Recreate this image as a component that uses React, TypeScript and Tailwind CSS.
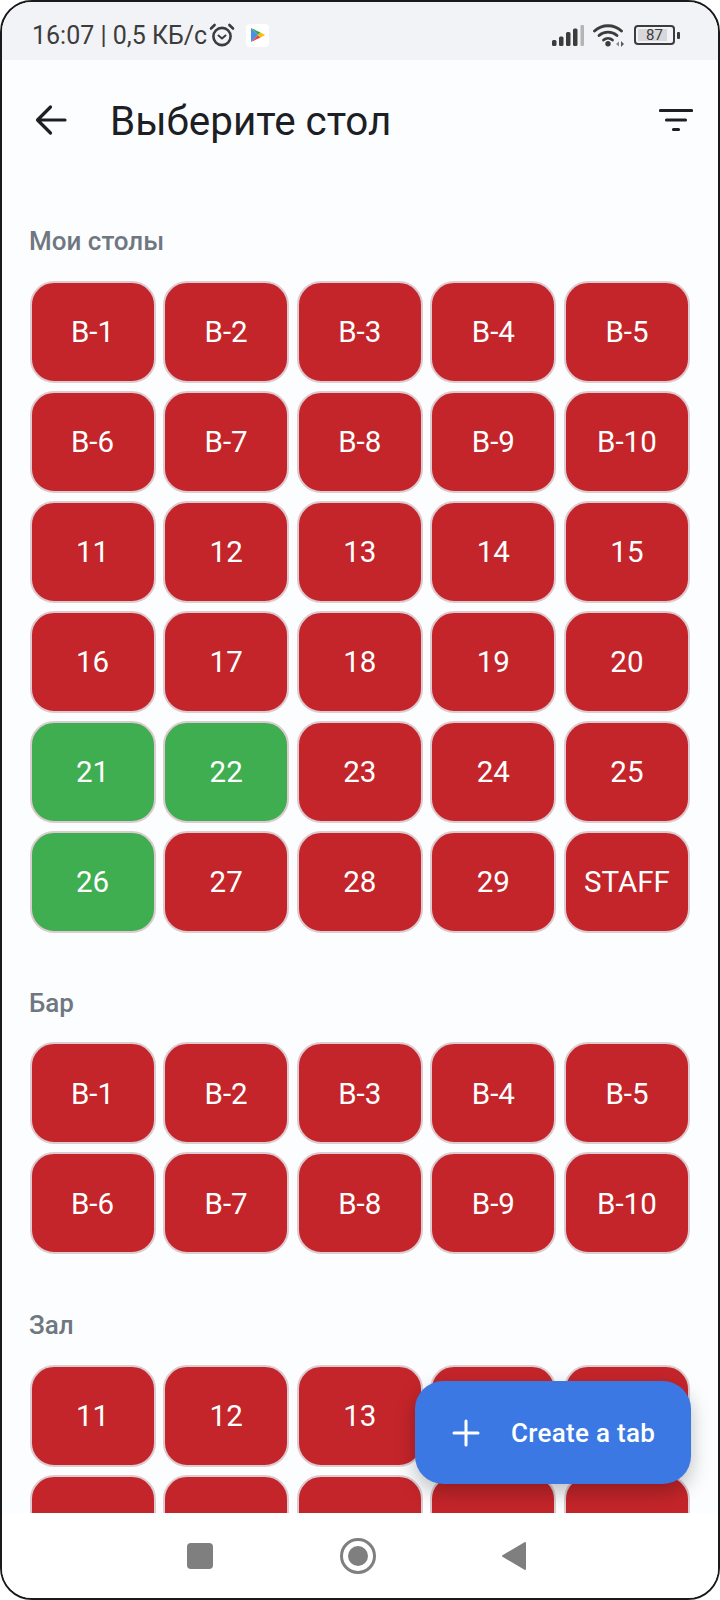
import React from "react";

const GREEN = new Set(["21", "22", "26"]);

function Table({ label }: { label: string }) {
  const green = GREEN.has(label);
  return (
    <div
      className={`h-[102px] pt-[3px] flex items-center justify-center rounded-[24px] border-2 border-[#dccbd0] text-white text-[29.5px] leading-none ${
        green ? "bg-[#3fae50]" : "bg-[#c4252a]"
      }`}
    >
      {label}
    </div>
  );
}

function Section({ title, items, className }: { title: string; items: string[]; className: string }) {
  return (
    <section className={className}>
      <h2 className="ml-[27px] text-[26px] leading-[32px] font-medium text-[#6f7780]">{title}</h2>
      <div className="mt-[23.5px] ml-[27.5px] w-[660.5px] grid grid-cols-5 gap-x-[7.5px] gap-y-[8px]">
        {items.map((t, i) => (
          <Table key={i} label={t} />
        ))}
      </div>
    </section>
  );
}

const bar = ["B-1", "B-2", "B-3", "B-4", "B-5", "B-6", "B-7", "B-8", "B-9", "B-10"];
const n = (a: number, b: number) => Array.from({ length: b - a + 1 }, (_, i) => String(a + i));

function Alarm() {
  return (
    <svg width="26" height="24" viewBox="0 0 26 24" fill="none" stroke="#3c3c3c" strokeWidth="2.6" strokeLinecap="round" strokeLinejoin="round">
      <circle cx="13" cy="13.5" r="8.6" />
      <path d="M9.5 12.5l3.5 3 3.5-3" strokeWidth="2" />
      <path d="M2 5.500l3.600-3.500M24 5.500l-3.600-3.500" />
    </svg>
  );
}

function Play() {
  return (
    <div className="w-[23px] h-[23px] rounded-[4px] bg-white flex items-center justify-center">
      <svg width="15" height="16" viewBox="0 0 15 16">
        <path d="M1 1l7 7-7 7z" fill="#4a90e8" />
        <path d="M1 1l9.5 4.5L8 8z" fill="#34a853" />
        <path d="M1 15l9.5-4.5L8 8z" fill="#e8453c" />
        <path d="M10.5 5.5L15 8l-4.5 2.5L8 8z" fill="#fbbc04" />
      </svg>
    </div>
  );
}

function Signal() {
  return (
    <svg width="32" height="21" viewBox="0 0 32 21">
      <rect x="0" y="15" width="4.500" height="6" rx="1.500" fill="#3c3c3c" />
      <rect x="7" y="11.500" width="4.500" height="9.500" rx="1.500" fill="#3c3c3c" />
      <rect x="14" y="7" width="4.500" height="14" rx="1.500" fill="#3c3c3c" />
      <rect x="21" y="3.500" width="4.500" height="17.500" rx="1.500" fill="#3c3c3c" />
      <rect x="28.500" y="0" width="3.500" height="21" rx="1" fill="#b4b4b4" />
    </svg>
  );
}

function Wifi() {
  return (
    <svg width="32" height="24" viewBox="0 0 32 24" fill="none" stroke="#3c3c3c" strokeWidth="2.8" strokeLinecap="round">
      <path d="M1.500 8C9 1 21 1 28.500 8" />
      <path d="M6 12.500c5-4.400 13-4.400 18 0" />
      <path d="M10.500 17c2.600-2.200 6.400-2.200 9 0" />
      <circle cx="15" cy="20.800" r="1.300" fill="#3c3c3c" />
      <path d="M26 18.500l-3 2.500 3 2.500z" fill="#8a8a8a" stroke="none" />
      <path d="M28 18l3 3-3 3z" fill="#5a5a5a" stroke="none" />
    </svg>
  );
}

function Battery() {
  return (
    <div className="flex items-center">
      <div className="w-[41px] h-[20px] rounded-[4px] border-2 border-[#3c3c3c] p-[2px] relative flex items-center">
        <div className="w-[29px] h-[12px] bg-[#d8d8da]" />
        <span className="absolute inset-0 flex items-center justify-center text-[15px] leading-none text-[#3c3c3c]">87</span>
      </div>
      <div className="w-[3px] h-[7px] rounded-[1px] bg-[#3c3c3c] ml-[2px]" />
    </div>
  );
}

export default function App() {
  return (
    <div className="w-[720px] h-[1600px] bg-white" style={{ fontFamily: "Roboto, sans-serif" }}>
      <div className="relative w-[720px] h-[1600px] rounded-[32px] border-2 border-[#1a1a1a] overflow-hidden bg-white flex flex-col">
        <div className="h-[58px] shrink-0 pt-[8px] bg-[#f2f3f7] flex items-center pl-[30px] pr-[38px]">
          <span className="text-[25px] leading-none text-[#3c3c3c]">16:07 | 0,5 КБ/с</span>
          <span className="ml-[2px]"><Alarm /></span>
          <span className="ml-[11px]"><Play /></span>
          <div className="ml-auto flex items-center gap-[9px]">
            <Signal />
            <Wifi />
            <Battery />
          </div>
        </div>

        <div className="h-[1453px] shrink-0 bg-[#fcfdff] overflow-hidden">
          <div className="h-[120px] flex items-center pl-[32px] pr-[25px]">
            <svg width="34" height="34" viewBox="0 0 34 34" fill="none" stroke="#1c2024" strokeWidth="3.2" strokeLinecap="round" strokeLinejoin="round">
              <path d="M3.500 17h27.500M16.500 4L3.500 17l13 13" />
            </svg>
            <h1 className="ml-[42px] pt-[4px] text-[40.4px] leading-none text-[#1c2024]">Выберите стол</h1>
            <svg className="ml-auto" width="34" height="24" viewBox="0 0 34 24" fill="none" stroke="#1c2024" strokeWidth="3.200" strokeLinecap="round">
              <path d="M1.500 2.500h31M7.500 12h19M14.500 21.500h5" />
            </svg>
          </div>
          <Section title="Мои столы" className="pt-[45px]" items={[...bar, ...n(11, 29), "STAFF"]} />
          <Section title="Бар" className="pt-[54px]" items={bar} />
          <Section title="Зал" className="pt-[55px]" items={n(11, 20)} />
        </div>

        <div className="flex-1 bg-white flex items-center">
          <div className="ml-[185px] w-[26px] h-[26px] rounded-[4px] bg-[#7f7f7f]" />
          <div className="ml-[127px] w-[36px] h-[36px] rounded-full border-[3px] border-[#7f7f7f] flex items-center justify-center">
            <div className="w-[20px] h-[20px] rounded-full bg-[#7f7f7f]" />
          </div>
          <svg className="ml-[125px]" width="26" height="30" viewBox="0 0 26 30">
            <path d="M24 2v26L2 15z" fill="#7f7f7f" stroke="#7f7f7f" strokeWidth="2" strokeLinejoin="round" />
          </svg>
        </div>

        <div className="absolute left-[413px] top-[1379px] w-[276px] h-[103px] rounded-[28px] bg-[#3b78e3] shadow-[0_8px_20px_rgba(0,0,0,0.25)] flex items-center text-white">
          <svg className="ml-[37px]" width="28" height="28" viewBox="0 0 28 28" fill="none" stroke="white" strokeWidth="3" strokeLinecap="round">
            <path d="M14 2v24M2 14h24" />
          </svg>
          <span className="ml-[31px] text-[26px] leading-none font-medium tracking-[0.3px]">Create a tab</span>
        </div>
      </div>
    </div>
  );
}
